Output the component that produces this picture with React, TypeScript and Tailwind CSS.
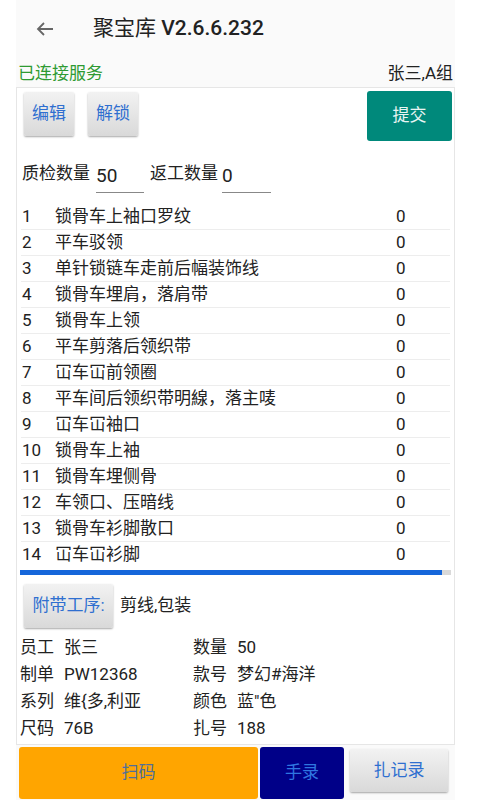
import React from 'react'

const FONT = "Roboto, 'Noto Sans CJK SC', sans-serif"

const processes = [
  '锁骨车上袖口罗纹',
  '平车驳领',
  '单针锁链车走前后幅装饰线',
  '锁骨车埋肩，落肩带',
  '锁骨车上领',
  '平车剪落后领织带',
  '冚车冚前领圈',
  '平车间后领织带明線，落主唛',
  '冚车冚袖口',
  '锁骨车上袖',
  '锁骨车埋侧骨',
  '车领口、压暗线',
  '锁骨车衫脚散口',
  '冚车冚衫脚',
]

const info = [
  ['员工', '张三', '数量', '50'],
  ['制单', 'PW12368', '款号', '梦幻#海洋'],
  ['系列', '维{多,利亚', '颜色', '蓝"色'],
  ['尺码', '76B', '扎号', '188'],
]

function GrayButton({ children, className = '' }: { children: React.ReactNode; className?: string }) {
  return (
    <div
      className={`flex items-center justify-center rounded-[2px] bg-gradient-to-b from-[#f2f2f2] to-[#d9d9d9] text-[#2f6fd0] shadow-[0_1px_2px_rgba(0,0,0,0.35)] ${className}`}
    >
      {children}
    </div>
  )
}

export default function App() {
  return (
    <div className="w-[480px] h-[800px] bg-white overflow-hidden" style={{ fontFamily: FONT }}>
      <div className="ml-[16px] w-[439px] h-[800px] bg-[#fafafa] flex flex-col text-[#222]">
        {/* 标题栏 */}
        <div className="h-[60px] flex items-center pb-[2px]">
          <svg width="18" height="14" viewBox="0 0 18 14" className="ml-[20px]">
            <path d="M17 7H2M8 1L2 7l6 6" fill="none" stroke="#666" strokeWidth="1.8" />
          </svg>
          <span className="ml-[39px] text-[21px] text-[#222]">
            聚宝库 <span className="font-medium">V2.6.6.232</span>
          </span>
        </div>

        {/* 连接状态 */}
        <div className="h-[27px] flex items-center justify-between pl-[2px] pr-[2px] text-[17px]">
          <span className="text-[#2e9a32]">已连接服务</span>
          <span>张三,A组</span>
        </div>

        {/* 主卡片 */}
        <div className="h-[658px] border border-[#e6e6e6] bg-white flex flex-col">
          <div className="flex items-start px-[7px] pt-[3px]">
            <GrayButton className="w-[50px] h-[44px] mt-[1px] text-[17px]">编辑</GrayButton>
            <GrayButton className="w-[50px] h-[44px] mt-[1px] ml-[14px] text-[17px]">解锁</GrayButton>
            <div className="ml-auto mr-[-5px] w-[85px] h-[50px] rounded-[3px] bg-[#00897b] text-[#e8f5f3] text-[17px] flex items-center justify-center">
              提交
            </div>
          </div>

          <div className="flex items-end mt-[16px] pl-[5px] h-[36px] text-[17px]">
            <span className="pb-[7px]">质检数量</span>
            <span className="ml-[6px] w-[48px] border-b border-[#888] pb-[4px] text-[19px] leading-[24px]">50</span>
            <span className="ml-[6px] pb-[7px]">返工数量</span>
            <span className="ml-[4px] w-[49px] border-b border-[#888] pb-[4px] text-[19px] leading-[24px]">0</span>
          </div>

          {/* 工序列表 */}
          <div className="mt-[11px] px-[4px]">
            {processes.map((p, i) => (
              <div
                key={i}
                className={`h-[26px] flex items-center text-[17px] ${i < processes.length - 1 ? 'border-b border-[#ededed]' : ''}`}
              >
                <span className="w-[34px] pl-[1px]">{i + 1}</span>
                <span className="flex-1">{p}</span>
                <span className="w-[54px]">0</span>
              </div>
            ))}
          </div>
          <div className="mx-[3px] mt-[2px] h-[5px] flex">
            <div className="flex-1 bg-[#1566da]" />
            <div className="w-[9px] bg-[#d9d9d9]" />
          </div>

          {/* 附带工序 */}
          <div className="flex items-center px-[7px] mt-[9px]">
            <GrayButton className="w-[89px] h-[44px] text-[17px]">附带工序:</GrayButton>
            <span className="ml-[7px] text-[17px]">剪线,包装</span>
          </div>

          <div className="mt-[6px] pl-[3px] text-[17px]">
            {info.map((r, i) => (
              <div key={i} className="h-[27px] flex items-center">
                <span className="w-[44px]">{r[0]}</span>
                <span className="w-[129px]">{r[1]}</span>
                <span className="w-[44px]">{r[2]}</span>
                <span>{r[3]}</span>
              </div>
            ))}
          </div>
        </div>

        {/* 底部按钮 */}
        <div className="flex items-start mt-[2px] pl-[3px]">
          <div className="w-[239px] h-[52px] rounded-[3px] bg-[#ffa500] text-[#4f6f99] text-[17px] flex items-center justify-center">
            扫码
          </div>
          <div className="ml-[2px] w-[84px] h-[52px] rounded-[3px] bg-[#000088] text-[#2f76e0] text-[17px] flex items-center justify-center">
            手录
          </div>
          <GrayButton className="ml-[6px] mt-[2px] w-[98px] h-[43px] text-[17px]">扎记录</GrayButton>
        </div>
      </div>
    </div>
  )
}
